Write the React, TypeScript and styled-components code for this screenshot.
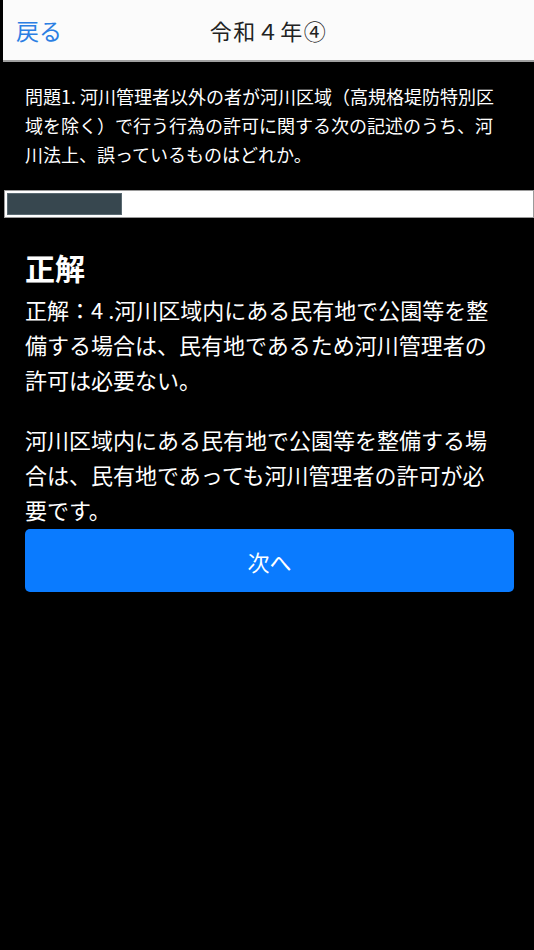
import React from 'react'
import styled, { createGlobalStyle } from 'styled-components'

const GlobalStyle = createGlobalStyle`
html, body {
  margin: 0;
  padding: 0;
  background: #000;
}
body {
  font-family: "Noto Sans CJK JP", "Noto Sans", sans-serif;
  color: #fff;
}
`

const Header = styled.header`
display: flex;
align-items: center;
justify-content: center;
position: relative;
height: 60px;
margin-left: 3px;
background-color: #fbfbfb;
border-bottom: 2px solid #a0a0a0;
`

const BackLink = styled.a`
position: absolute;
left: 13px;
top: 50%;
transform: translateY(-50%);
font-size: 23px;
color: #2b7fe3;
text-decoration: none;
cursor: pointer;
`

const Title = styled.h1`
margin: 0;
font-size: 22px;
font-weight: 400;
color: #222;
letter-spacing: 1.5px;
`

const Question = styled.p`
margin: 0;
padding: 20px 29px 0 25px;
font-size: 18px;
line-height: 29px;
`

const ProgressTrack = styled.div`
display: flex;
height: 22px;
margin: 21px 0 0 4px;
padding: 2px;
background-color: #fff;
border: 1px solid #9a9a9a;
`

const ProgressFill = styled.div`
height: 100%;
background-color: #37474f;
border: 1px solid #5a6a72;
box-sizing: border-box;
`

const Content = styled.section`
padding: 0 20px 0 25px;
`

const Heading = styled.h2`
margin: 31px 0 0;
font-size: 30px;
line-height: 36px;
font-weight: 700;
`

const Paragraph = styled.p<{ $gap: number }>`
margin: ${(p) => p.$gap}px 0 0;
padding-right: 9px;
font-size: 22px;
line-height: 35px;
`

const NextButton = styled.button`
display: flex;
align-items: center;
justify-content: center;
width: 100%;
height: 63px;
margin-top: 2px;
border: none;
border-radius: 5px;
background-color: #0a7bff;
color: #fff;
font-family: inherit;
font-size: 22px;
cursor: pointer;
`

export default function App() {
  const progress = 22

  return (
    <>
      <GlobalStyle />
      <Header>
        <BackLink>戻る</BackLink>
        <Title>令和４年④</Title>
      </Header>
      <Question>
        問題1. 河川管理者以外の者が河川区域（高規格堤防特別区域を除く）で行う行為の許可に関する次の記述のうち、河川法上、誤っているものはどれか。
      </Question>
      <ProgressTrack>
        <ProgressFill style={{ width: `${progress}%` }} />
      </ProgressTrack>
      <Content>
        <Heading>正解</Heading>
        <Paragraph $gap={7}>
          正解：4 .河川区域内にある民有地で公園等を整備する場合は、民有地であるため河川管理者の許可は必要ない。
        </Paragraph>
        <Paragraph $gap={25}>
          河川区域内にある民有地で公園等を整備する場合は、民有地であっても河川管理者の許可が必要です。
        </Paragraph>
        <NextButton>次へ</NextButton>
      </Content>
    </>
  )
}
